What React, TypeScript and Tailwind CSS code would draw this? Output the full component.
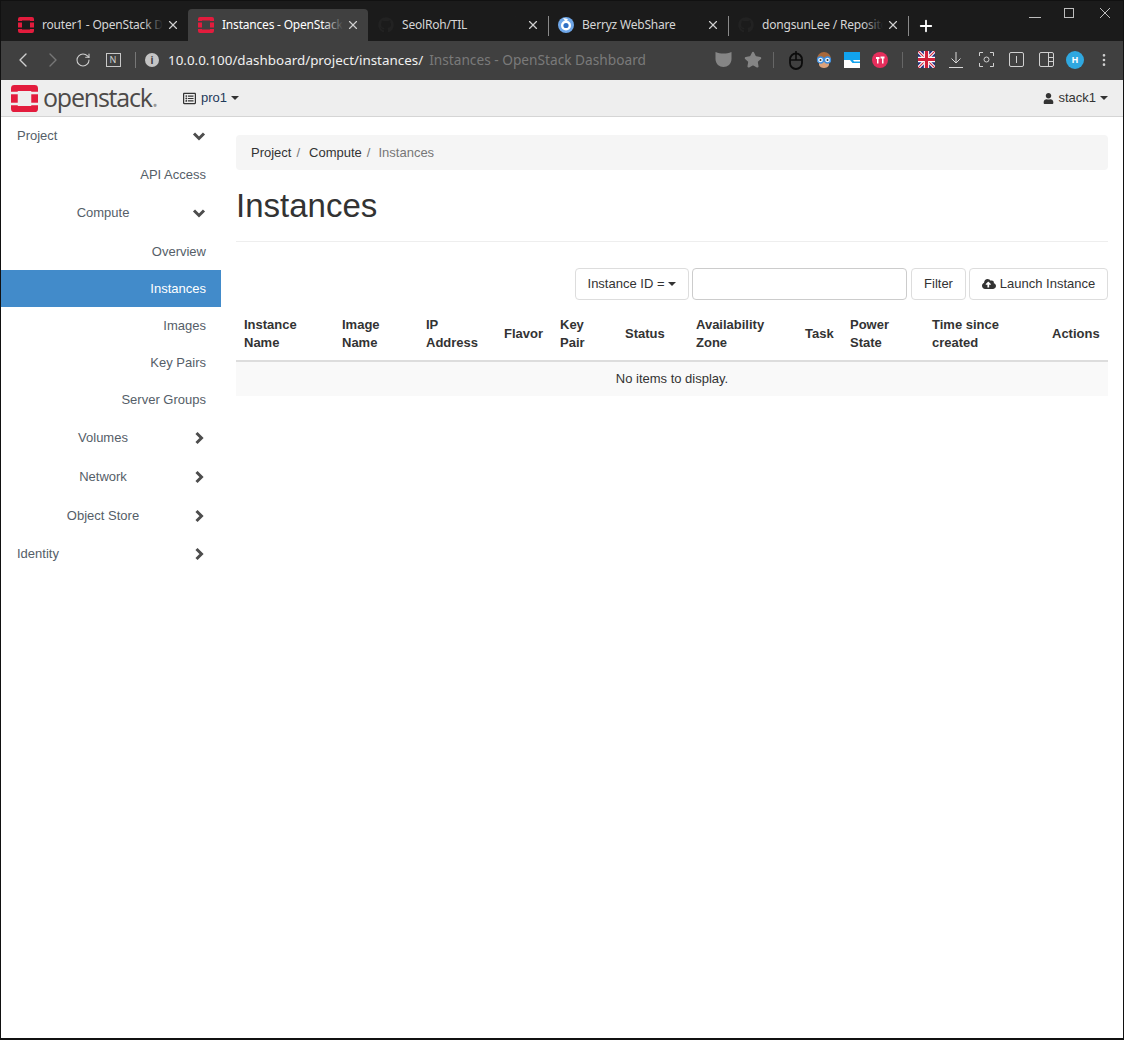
import React from 'react';
import { FaCloudUploadAlt, FaGithub, FaRegListAlt, FaUser } from 'react-icons/fa';
import { ChevronLeft, ChevronRight, MoreVertical, Plus, RotateCw, Star, X } from 'lucide-react';

const OpenStackMark = ({ size = 16 }: { size?: number }) => (
    <svg width={size} height={size} viewBox="0 0 32 32">
        <path fill="#e31c3d" d="M4 0h24a4 4 0 0 1 4 4v4h-8V7H8v1H0V4a4 4 0 0 1 4-4z" />
        <path fill="#e31c3d" d="M0 24h8v1h16v-1h8v4a4 4 0 0 1-4 4H4a4 4 0 0 1-4-4z" />
        <rect fill="#e31c3d" x="0" y="11" width="8" height="10" />
        <rect fill="#e31c3d" x="24" y="11" width="8" height="10" />
    </svg>
);

const tabs = [
    { title: 'router1 - OpenStack Dashboard', icon: 'os' },
    { title: 'Instances - OpenStack Dashboard', icon: 'os', active: true },
    { title: 'SeolRoh/TIL', icon: 'gh', sep: true },
    { title: 'Berryz WebShare', icon: 'berryz', sep: true },
    { title: 'dongsunLee / Repositories', icon: 'gh', sep: true },
];

const TabIcon = ({ kind }: { kind: string }) => {
    if (kind === 'os') return <OpenStackMark />;
    if (kind === 'gh') return <FaGithub size={16} color="#222222" />;
    return (
        <svg width="16" height="16" viewBox="0 0 16 16">
            <circle cx="8" cy="8" r="8" fill="#6ea6e8" />
            <circle cx="8" cy="8.500" r="5" fill="#ffffff" />
            <circle cx="8" cy="8.500" r="2.600" fill="#2f6fc4" />
            <path d="M5 1l5 1-2 3z" fill="#ffffff" />
        </svg>
    );
};

const Tab = ({ title, icon, active, sep }: { title: string; icon: string; active?: boolean; sep?: boolean }) => (
    <div className={`relative flex h-8 w-[180px] shrink-0 items-center rounded-t-[4px] pl-[10px] ${active ? 'bg-[#404040] text-white' : 'text-[#d6d6d6]'}`}>
        <TabIcon kind={icon} />
        <div className="relative ml-2 w-[121px] overflow-hidden whitespace-nowrap text-[12px] tracking-[-0.2px]">
            {title}
            <div className={`absolute inset-y-0 right-0 w-5 bg-gradient-to-r from-transparent ${active ? 'to-[#404040]' : 'to-[#1b1b1b]'}`} />
        </div>
        <X size={14} strokeWidth={2} className="ml-[3px] text-[#cfcfcf]" />
        {sep && <div className="absolute right-[-1px] top-[7px] h-[20px] w-px bg-[#8a8a8a]" />}
    </div>
);

const ToolIcon = ({ w = 30, children }: { w?: number; children: React.ReactNode }) => (
    <div className="flex shrink-0 items-center justify-center" style={{ width: w }}>{children}</div>
);

const TabStrip = () => (
    <div className="flex h-[40px] items-end bg-[#1b1b1b] pl-[7px]">
        {tabs.map((t) => <Tab key={t.title} {...t} />)}
        <Plus size={18} strokeWidth={2.4} className="mb-[6px] ml-[9px] text-white" />
        <div className="ml-auto flex self-start pt-[7px] text-[#bdbdbd]">
            <svg width="32" height="12" viewBox="0 0 32 12" className="mr-[2px]"><path d="M10 9.500h12" stroke="currentColor" /></svg>
            <svg width="32" height="12" viewBox="0 0 32 12" className="mr-[2px]"><rect x="11.500" y=".5" width="9" height="9" fill="none" stroke="currentColor" /></svg>
            <svg width="36" height="12" viewBox="0 0 36 12"><path d="M13 0l10 10M23 0L13 10" stroke="currentColor" /></svg>
        </div>
    </div>
);

const Toolbar = () => (
    <div className="flex h-[39px] items-center bg-[#404040] pb-[2px] pl-[7px] text-[#cfcfcf]">
        <ToolIcon><ChevronLeft size={24} strokeWidth={1.4} /></ToolIcon>
        <ToolIcon><ChevronRight size={24} strokeWidth={1.4} className="text-[#777777]" /></ToolIcon>
        <ToolIcon><RotateCw size={16} strokeWidth={1.6} /></ToolIcon>
        <ToolIcon>
            <div className="flex h-[14px] w-[15px] items-center justify-center border border-[#c8c8c8] text-[9px] leading-none">N</div>
        </ToolIcon>
        <div className="ml-[7px] h-[16px] w-px bg-[#777777]" />
        <div className="ml-[9px] flex h-[14px] w-[14px] items-center justify-center rounded-full bg-[#c4c4c4]">
            <div className="font-bold text-[10px] leading-none text-[#404040]">i</div>
        </div>
        <div className="ml-[9px] text-[13.4px] text-[#f0f0f0]">10.0.0.100/dashboard/project/instances/</div>
        <div className="ml-[6px] text-[13.7px] text-[#7a7a7a]">Instances - OpenStack Dashboard</div>
        <div className="ml-auto flex items-center pr-[5px]">
            <ToolIcon>
                <svg width="17" height="15" viewBox="0 0 16 15"><path fill="#858585" d="M0 0c3 1 5 1.500 8 1.500S13 1 16 0v7c0 5-4 8-8 8s-8-3-8-8z" /></svg>
            </ToolIcon>
            <ToolIcon><Star size={18} fill="#858585" stroke="#858585" /></ToolIcon>
            <div className="ml-[5px] mr-[8px] h-[16px] w-px bg-[#666666]" />
            <ToolIcon w={28}>
                <svg width="14" height="20" viewBox="0 0 14 20"><rect x="1" y="3.500" width="12" height="15.500" rx="6" fill="none" stroke="#0c0c0c" strokeWidth="1.800" /><path d="M1 10h12M7 1v9" stroke="#0c0c0c" strokeWidth="1.600" /></svg>
            </ToolIcon>
            <ToolIcon w={28}>
                <svg width="16" height="18" viewBox="0 0 16 18">
                    <path d="M1 8a7 7 0 0 1 14 0v3H1z" fill="#a9683a" />
                    <path d="M3 11h10v3c-1 4-9 4-10 0z" fill="#dca37c" />
                    <circle cx="4.500" cy="9" r="3" fill="#e8f4ff" stroke="#3d8fe0" strokeWidth="1.300" />
                    <circle cx="11.500" cy="9" r="3" fill="#e8f4ff" stroke="#3d8fe0" strokeWidth="1.300" />
                    <circle cx="4.500" cy="9" r="1" fill="#333333" />
                    <circle cx="11.500" cy="9" r="1" fill="#333333" />
                </svg>
            </ToolIcon>
            <ToolIcon w={28}>
                <svg width="16" height="16" viewBox="0 0 16 16"><rect width="16" height="16" fill="#11a3ee" /><path d="M0 8h6l2.500 3H16v5H0z" fill="#ffffff" /><path d="M9 8h7v1.500H10z" fill="#ffffff" /></svg>
            </ToolIcon>
            <ToolIcon w={28}>
                <svg width="16" height="16" viewBox="0 0 16 16"><circle cx="8" cy="8" r="8" fill="#e62e5c" /><path d="M4 5h3.500v2H6.500v4.500H5V7H4zM8.500 4.500H12.500v2H11.500v5H10v-5H8.500z" fill="#ffffff" /></svg>
            </ToolIcon>
            <div className="mx-[8px] h-[16px] w-px bg-[#666666]" />
            <ToolIcon>
                <svg width="17" height="17" viewBox="0 0 16 16">
                    <rect width="16" height="16" fill="#23307f" />
                    <path d="M0 0l16 16M16 0L0 16" stroke="#ffffff" strokeWidth="3" />
                    <path d="M0 0l16 16M16 0L0 16" stroke="#d0213a" strokeWidth="1" />
                    <path d="M8 0v16M0 8h16" stroke="#ffffff" strokeWidth="5" />
                    <path d="M8 0v16M0 8h16" stroke="#d0213a" strokeWidth="3" />
                </svg>
            </ToolIcon>
            <ToolIcon>
                <svg width="14" height="16" viewBox="0 0 14 16" fill="none" stroke="#d8d8d8"><path d="M7 0v11M2.500 6.500L7 11l4.500-4.500M0 15.500h14" /></svg>
            </ToolIcon>
            <ToolIcon>
                <svg width="15" height="15" viewBox="0 0 15 15" fill="none" stroke="#d0d0d0"><path d="M.5 4V.5H4M11 .5h3.500V4M14.500 11v3.500H11M4 14.500H.5V11" /><circle cx="7.500" cy="7.500" r="2.500" /></svg>
            </ToolIcon>
            <ToolIcon>
                <svg width="15" height="15" viewBox="0 0 15 15" fill="none" stroke="#d0d0d0"><rect x=".5" y=".5" width="14" height="14" rx="1.500" /><path d="M7.500 4v7" /></svg>
            </ToolIcon>
            <ToolIcon>
                <svg width="15" height="15" viewBox="0 0 15 15" fill="none" stroke="#d0d0d0"><rect x=".5" y=".5" width="14" height="14" rx="1.500" /><path d="M9.500 .5v14M9.500 5.500h5M9.500 9.500h5" /></svg>
            </ToolIcon>
            <div className="mr-px">
                <ToolIcon w={28}>
                    <div className="flex h-[18px] w-[18px] items-center justify-center rounded-full bg-[#2fa8e0] text-[9px] font-bold text-white">H</div>
                </ToolIcon>
            </div>
            <ToolIcon w={28}><MoreVertical size={16} className="text-[#cfcfcf]" /></ToolIcon>
        </div>
    </div>
);

const Caret = () => <span className="ml-[4px] inline-block border-x-[4px] border-t-[4px] border-x-transparent border-t-current align-middle" />;

const Navbar = () => (
    <div className="flex h-[37px] items-center border-b border-[#d5d5d5] bg-[#eeeeee] pl-[10px] pr-[15px]">
        <OpenStackMark size={27} />
        <div className="ml-[5px] flex w-[114px] items-baseline pb-[2px] font-['Open_Sans',sans-serif] text-[25px] font-medium leading-none tracking-[-1.2px] text-[#4d4a48]">
            openstack<span className="text-[#9a9a9a]">.</span>
        </div>
        <div className="ml-[26px] flex items-center text-[#333333]">
            <FaRegListAlt size={13} />
            <span className="ml-[5px] text-[#1f3a5a]">pro1</span>
            <Caret />
        </div>
        <div className="ml-auto flex items-center text-[#333333]">
            <FaUser size={11} />
            <span className="ml-[4px]">stack1</span>
            <Caret />
        </div>
    </div>
);

const Chevron = ({ dir }: { dir: 'down' | 'right' }) => (
    <svg width="14" height="14" viewBox="0 0 14 14" fill="none" stroke="#4d4d4d" strokeWidth="3">
        <path d={dir === 'down' ? 'M2 4.500l5 5 5-5' : 'M4.500 2l5 5-5 5'} />
    </svg>
);

type NavItem = { label: string; h: string; align: string; arrow?: 'down' | 'right'; active?: boolean };

// pt-[2px] on a few rows: their labels sit a pixel lower than the row centre
const navItems: NavItem[] = [
    { label: 'Project', h: 'h-[38px]', align: 'left', arrow: 'down' },
    { label: 'API Access', h: 'h-[38px] pt-[2px]', align: 'end' },
    { label: 'Compute', h: 'h-[39px]', align: 'mid', arrow: 'down' },
    { label: 'Overview', h: 'h-[38px] pt-[2px]', align: 'end' },
    { label: 'Instances', h: 'h-[37px]', align: 'end', active: true },
    { label: 'Images', h: 'h-[37px]', align: 'end' },
    { label: 'Key Pairs', h: 'h-[37px]', align: 'end' },
    { label: 'Server Groups', h: 'h-[37px]', align: 'end' },
    { label: 'Volumes', h: 'h-[39px]', align: 'mid', arrow: 'right' },
    { label: 'Network', h: 'h-[39px]', align: 'mid', arrow: 'right' },
    { label: 'Object Store', h: 'h-[38px] pt-[2px]', align: 'mid', arrow: 'right' },
    { label: 'Identity', h: 'h-[39px]', align: 'left', arrow: 'right' },
];

const Sidebar = () => (
    <div className="w-[220px] shrink-0">
        {navItems.map((item) => (
            <div key={item.label} className={`flex items-center ${item.h} ${item.active ? 'bg-[#428bca] text-white' : 'text-[#555e68]'}`}>
                {item.align === 'end' && <div className="w-full pr-[15px] text-right">{item.label}</div>}
                {item.align === 'left' && <div className="flex-1 pl-[16px]">{item.label}</div>}
                {item.align === 'mid' && <div className="w-[180px] pl-[24px] text-center">{item.label}</div>}
                {item.arrow && (
                    <div className={`mr-[15px] flex w-[14px] justify-center ${item.align === 'mid' ? 'ml-auto' : ''}`}>
                        <Chevron dir={item.arrow} />
                    </div>
                )}
            </div>
        ))}
    </div>
);

const columns: { label: React.ReactNode; w: string }[] = [
    { label: <>Instance<br />Name</>, w: 'w-[98px]' },
    { label: <>Image<br />Name</>, w: 'w-[84px]' },
    { label: <>IP<br />Address</>, w: 'w-[78px]' },
    { label: 'Flavor', w: 'w-[56px]' },
    { label: <>Key<br />Pair</>, w: 'w-[65px]' },
    { label: 'Status', w: 'w-[71px]' },
    { label: <>Availability<br />Zone</>, w: 'w-[109px]' },
    { label: 'Task', w: 'w-[45px]' },
    { label: <>Power<br />State</>, w: 'w-[82px]' },
    { label: <>Time since<br />created</>, w: 'w-[120px]' },
    { label: 'Actions', w: 'w-[64px]' },
];

const btn = 'flex h-[32px] items-center justify-center rounded-[4px] border border-[#dddddd] bg-white text-[#333333]';

const Main = () => (
    <div className="flex-1 pl-[15px] pr-[15px] pt-[18px]">
        <div className="flex h-[35px] items-center rounded-[4px] bg-[#f5f5f5] pl-[15px] text-[#333333]">
            <span>Project</span>
            <span className="ml-[5px] text-[#777777]">/</span>
            <span className="ml-[9px]">Compute</span>
            <span className="ml-[5px] text-[#777777]">/</span>
            <span className="ml-[8px] text-[#777777]">Instances</span>
        </div>
        <h1 className="mt-[16px] text-[33px] leading-[40px] text-[#333333]">Instances</h1>
        <div className="mt-[15px] border-t border-[#eeeeee]" />
        <div className="mt-[26px] flex justify-end">
            <div className={`${btn} w-[114px]`}>Instance ID =<Caret /></div>
            <input className="ml-[3px] h-[32px] w-[215px] rounded-[4px] border border-[#cccccc] bg-white" />
            <div className={`${btn} ml-[4px] w-[55px]`}>Filter</div>
            <div className={`${btn} ml-[3px] w-[139px]`}><FaCloudUploadAlt size={14} className="mr-[4px]" />Launch Instance</div>
        </div>
        <table className="mt-[8px] w-full table-fixed border-collapse text-[#333333]">
            <thead>
                <tr className="h-[53px] border-b-2 border-[#dddddd]">
                    {columns.map((c, i) => (
                        <th key={i} className={`${c.w} px-[8px] text-left font-bold leading-[18px]`}>{c.label}</th>
                    ))}
                </tr>
            </thead>
            <tbody>
                <tr className="h-[35px] bg-[#f9f9f9]">
                    <td colSpan={11} className="pb-px text-center">No items to display.</td>
                </tr>
            </tbody>
        </table>
    </div>
);

export default function App() {
    return (
        <div className="flex h-[1040px] w-[1124px] flex-col overflow-hidden border border-b-[2px] border-[#111111] bg-white font-['Liberation_Sans',Arial,sans-serif] text-[13px] leading-[18px]">
            <div className="font-['Noto_Sans',sans-serif]">
                <TabStrip />
                <Toolbar />
            </div>
            <Navbar />
            <div className="flex flex-1">
                <Sidebar />
                <Main />
            </div>
        </div>
    );
}
